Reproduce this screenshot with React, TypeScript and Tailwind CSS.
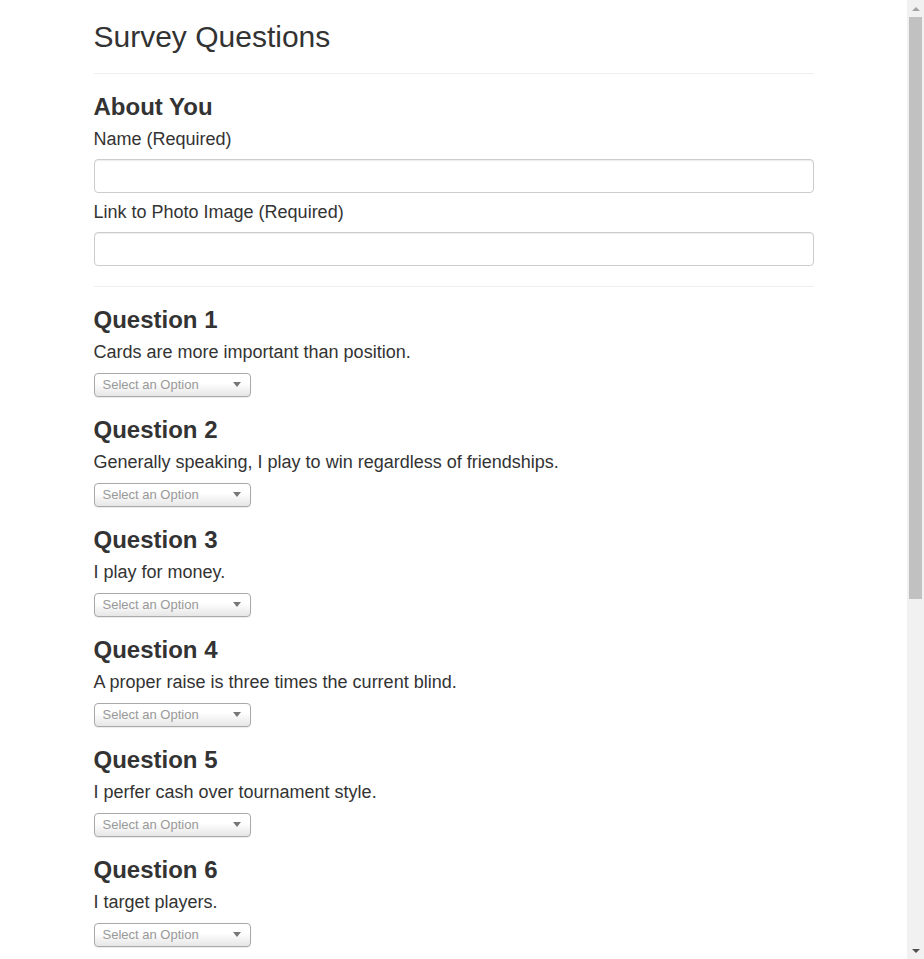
import { useState } from "react";

const questions = [
  "Cards are more important than position.",
  "Generally speaking, I play to win regardless of friendships.",
  "I play for money.",
  "A proper raise is three times the current blind.",
  "I perfer cash over tournament style.",
  "I target players.",
  "I bluff more than I should.",
  "I prefer to play online rather than live.",
  "I keep track of my wins and losses.",
  "I fold when I am unsure.",
];

const options = ["1 (Strongly Disagree)", "2", "3", "4", "5 (Strongly Agree)"];

const QuestionSelect = () => {
  const [value, setValue] = useState("");
  return (
    <div className="relative mt-[10px] w-[157px] h-[24px]">
      <select
        value={value}
        onChange={(e) => setValue(e.target.value)}
        className="appearance-none w-full h-full pl-[8px] pr-[20px] text-[13px] text-[#999] border border-[#a9a9a9] rounded-[4px] bg-gradient-to-b from-white from-40% to-[#e6e6e6] shadow-[0_1px_1px_rgba(0,0,0,0.08)] outline-none"
      >
        <option value="">Select an Option</option>
        {options.map((o) => (
          <option key={o} value={o}>
            {o}
          </option>
        ))}
      </select>
      <span className="pointer-events-none absolute right-[10px] top-[10px] w-0 h-0 border-l-[4px] border-r-[4px] border-t-[5px] border-l-transparent border-r-transparent border-t-[#777]" />
    </div>
  );
};

// stand-in for the browser's page scrollbar seen in the screenshot
const ScrollBar = () => (
  <div className="w-[17px] shrink-0 h-full bg-[#f1f1f1] flex flex-col">
    <div className="h-[17px] flex items-center justify-center">
      <span className="w-0 h-0 border-l-[4px] border-r-[4px] border-b-[4px] border-l-transparent border-r-transparent border-b-[#a3a3a3]" />
    </div>
    <div className="flex-1 px-[2px]">
      <div className="h-[582px] bg-[#c1c1c1]" />
    </div>
    <div className="h-[17px] flex items-center justify-center">
      <span className="w-0 h-0 border-l-[4px] border-r-[4px] border-t-[4px] border-l-transparent border-r-transparent border-t-[#505050]" />
    </div>
  </div>
);

export default function App() {
  return (
    <div className="flex h-screen bg-white text-[#333] font-['Liberation_Sans',Arial,sans-serif]">
      <main className="flex-1 overflow-y-auto [scrollbar-width:none]">
        <div className="w-[720px] mx-auto pb-[60px]">
          <h2 className="mt-[20px] mb-0 text-[30px] leading-[33px]">Survey Questions</h2>
          <hr className="mt-[20px] mb-[20px] border-0 border-t border-[#eee]" />

          <h3 className="text-[24px] leading-[26px] font-bold">About You</h3>
          <label className="block mt-[9px] text-[18px] leading-[20px]">Name (Required)</label>
          <input
            type="text"
            className="block w-full mt-[10px] h-[34px] px-[12px] text-[14px] border border-[#ccc] rounded-[4px] shadow-[inset_0_1px_1px_rgba(0,0,0,0.075)] outline-none"
          />
          <label className="block mt-[9px] text-[18px] leading-[20px]">Link to Photo Image (Required)</label>
          <input
            type="text"
            className="block w-full mt-[10px] h-[34px] px-[12px] text-[14px] border border-[#ccc] rounded-[4px] shadow-[inset_0_1px_1px_rgba(0,0,0,0.075)] outline-none"
          />
          <hr className="mt-[20px] mb-[20px] border-0 border-t border-[#eee]" />

          {questions.map((q, i) => (
            <div key={i} className={i === 0 ? "" : "mt-[21px]"}>
              <h3 className="text-[24px] leading-[26px] font-bold">Question {i + 1}</h3>
              <p className="mt-[9px] text-[18px] leading-[20px]">{q}</p>
              <QuestionSelect />
            </div>
          ))}

          <button className="mt-[30px] h-[34px] px-[12px] text-[14px] text-white bg-[#337ab7] border border-[#2e6da4] rounded-[4px]">
            Submit
          </button>
        </div>
      </main>
      <ScrollBar />
    </div>
  );
}
